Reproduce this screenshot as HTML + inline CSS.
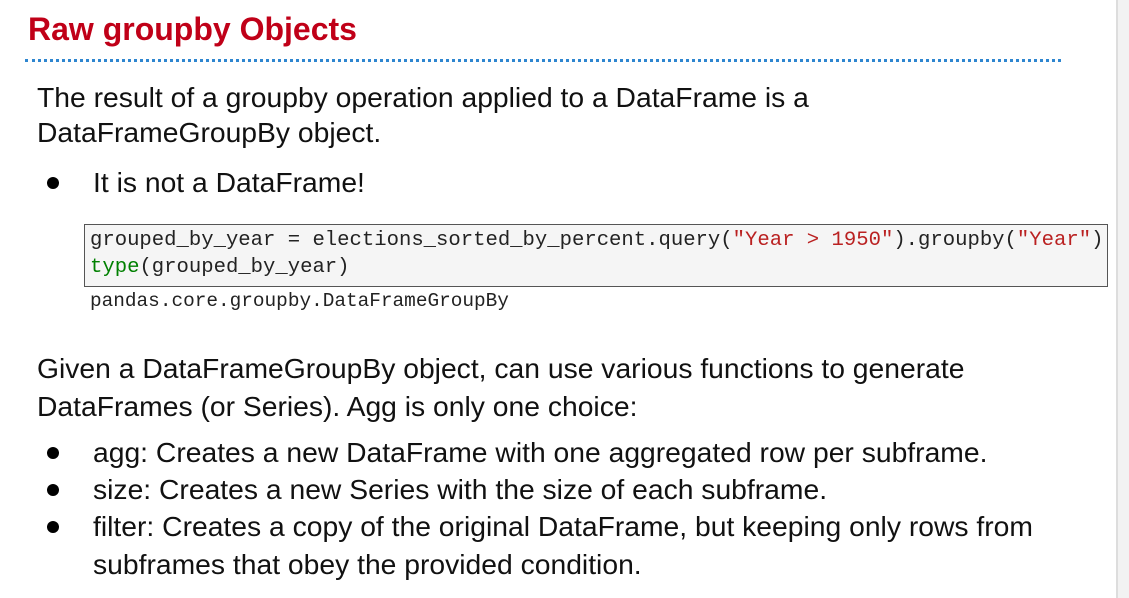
<!DOCTYPE html>
<html><head><meta charset="utf-8"><style>
body{margin:0;width:1129px;height:598px;background:#fff;overflow:hidden;position:relative;font-family:"Liberation Sans",sans-serif;color:#111}
.l{position:absolute;white-space:nowrap;transform-origin:0 50%;transform:scaleX(1.01);font-size:28px;line-height:32px}
.t{position:absolute;left:28px;top:11px;font-size:32px;font-weight:bold;color:#c00018;white-space:nowrap;line-height:36px}
.dots{position:absolute;left:25px;top:59px;width:1036px;border-top:3px dotted #2e86d0}
.b{position:absolute;width:12px;height:12px;border-radius:50%;background:#000}
.code{position:absolute;left:84px;top:224px;width:1022px;height:61px;background:#f5f5f5;border:1.5px solid #555}
.m{position:absolute;white-space:nowrap;font-family:"Liberation Mono",monospace;font-size:20.6px;line-height:26px;color:#222}
.s{color:#ba2121}.g{color:#008000}
.edge{position:absolute;left:1116px;top:0;width:13px;height:598px;background:#f2f2f2;border-left:2px solid #ddd}
</style></head><body>
<div class="t">Raw groupby Objects</div>
<div class="dots"></div>
<div class="l" style="left:37px;top:82px">The result of a groupby operation applied to a DataFrame is a</div>
<div class="l" style="left:37px;top:117px">DataFrameGroupBy object.</div>
<div class="b" style="left:47px;top:177px"></div>
<div class="l" style="left:93px;top:167px">It is not a DataFrame!</div>
<div class="code"></div>
<div class="m" style="left:90px;top:228px">grouped_by_year = elections_sorted_by_percent.query(<span class="s">"Year &gt; 1950"</span>).groupby(<span class="s">"Year"</span>)</div>
<div class="m" style="left:90px;top:255px"><span class="g">type</span>(grouped_by_year)</div>
<div class="m" style="left:90px;top:288px;font-size:19.4px">pandas.core.groupby.DataFrameGroupBy</div>
<div class="l" style="left:37px;top:353px">Given a DataFrameGroupBy object, can use various functions to generate</div>
<div class="l" style="left:37px;top:391px">DataFrames (or Series). Agg is only one choice:</div>
<div class="b" style="left:47px;top:447px"></div>
<div class="l" style="left:93px;top:437px">agg: Creates a new DataFrame with one aggregated row per subframe.</div>
<div class="b" style="left:47px;top:484px"></div>
<div class="l" style="left:93px;top:474px">size: Creates a new Series with the size of each subframe.</div>
<div class="b" style="left:47px;top:521px"></div>
<div class="l" style="left:93px;top:511px">filter: Creates a copy of the original DataFrame, but keeping only rows from</div>
<div class="l" style="left:93px;top:549px">subframes that obey the provided condition.</div>
<div class="edge"></div>
</body></html>
